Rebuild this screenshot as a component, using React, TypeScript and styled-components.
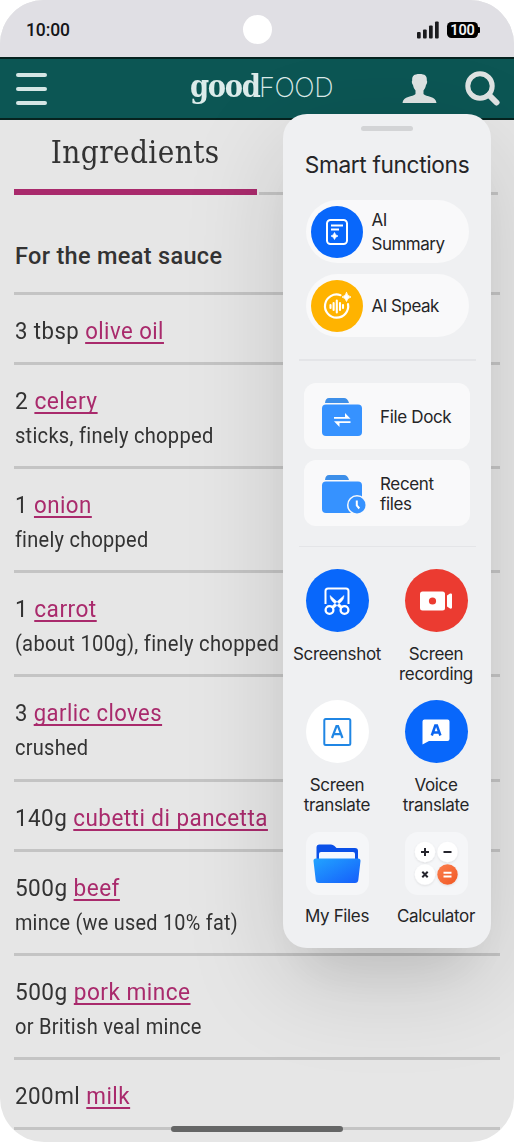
import React from "react";
import styled, { createGlobalStyle } from "styled-components";

const GlobalStyle = createGlobalStyle`
  *, *::before, *::after { box-sizing: border-box; }
  body { margin: 0; background: #fff; }
`;

const Phone = styled.main`
  position: relative;
  width: 514px;
  height: 1142px;
  overflow: hidden;
  border-radius: 44px;
  background: #e6e6e6;
  font-family: Roboto, "Liberation Sans", sans-serif;
  color: #333;
`;

const StatusBar = styled.header`
  display: grid;
  grid-template-columns: 1fr 28px 1fr;
  align-items: center;
  height: 57px;
  padding: 2px 36px 0 26px;
  background: #e0dfe4;
`;

const Clock = styled.span`
  font-size: 17.5px;
  font-weight: 500;
  line-height: 20px;
  letter-spacing: -0.1px;
  color: #151518;
`;

const Camera = styled.span`
  width: 29px;
  height: 29px;
  margin-left: 5px;
  border-radius: 50%;
  background: #fff;
`;

const StatusIcons = styled.div`
  display: flex;
  justify-content: flex-end;
  align-items: center;
  gap: 8px;
`;

const Battery = styled.span`
  position: relative;
  width: 31px;
  height: 16px;
  border-radius: 4.5px;
  background: #000;
  color: #f2f2f4;
  font-size: 14.5px;
  font-weight: 600;
  line-height: 17px;
  letter-spacing: -0.2px;
  text-align: center;
  &::after {
    content: "";
    position: absolute;
    right: -1.5px;
    top: 5px;
    width: 3px;
    height: 6px;
    border-radius: 1px;
    background: #000;
  }
`;

const SiteBar = styled.nav`
  display: flex;
  align-items: center;
  height: 63px;
  padding: 0 14px 0 16px;
  border-top: 2px solid #06231f;
  border-bottom: 2px solid #06231f;
  background: #0c5654;
`;

const Burger = styled.div`
  display: flex;
  flex-direction: column;
  gap: 10px;
  width: 31px;
  span { flex: none; height: 4px; border-radius: 2px; background: #d5e6e5; }
`;

const Logo = styled.div`
  display: flex;
  align-items: baseline;
  width: 144px;
  margin: -3px 0 0 143px;
  color: #dcebea;
  white-space: nowrap;
`;

const LogoGood = styled.b`
  width: 70px;
  font: 700 31px/40px "DejaVu Serif Condensed", "DejaVu Serif", serif;
  font-stretch: condensed;
  letter-spacing: -1.3px;
  transform: scaleX(0.98);
  transform-origin: 0 50%;
`;

const LogoFood = styled.span`
  margin-left: -1px;
  font: 200 27px/40px Inter, sans-serif;
  letter-spacing: -0.4px;
`;

const BarIcons = styled.div`
  display: flex;
  align-items: center;
  gap: 28px;
  margin-left: auto;
`;

const Tabs = styled.div`
  display: flex;
  align-items: flex-end;
  height: 75px;
  padding: 0 15px 0 14px;
`;

const ActiveTab = styled.h1`
  width: 243px;
  height: 75px;
  margin: 0;
  border-bottom: 6px solid #a92a6c;
  font: 400 31.5px/64px "DejaVu Serif Condensed", "DejaVu Serif", serif;
  font-stretch: condensed;
  letter-spacing: 0.4px;
  text-align: center;
  white-space: nowrap;
  span { display: inline-block; transform: scaleX(0.99); }
`;

const RestTab = styled.div`
  flex: 1;
  height: 3px;
  margin: 0 1px 0 2px;
  background: #c4c4c4;
`;

const Section = styled.h2`
  height: 97px;
  margin: 0;
  padding: 46px 15px 0;
  font-size: 23.5px;
  line-height: 30px;
  font-weight: 500;
  letter-spacing: 0.32px;
  white-space: nowrap;
`;

const List = styled.ul`
  margin: 0 14px;
  padding: 0;
  list-style: none;
`;

const Item = styled.li<{ $tall: boolean }>`
  height: ${(p) => (p.$tall ? 104.15 : 70)}px;
  padding-top: 21px;
  border-top: 3px solid #c4c4c4;
  white-space: nowrap;
`;

const Main = styled.div<{ $x: number }>`
  font-size: 24px;
  line-height: 30px;
  padding-left: 1px;
  letter-spacing: 0.5px;
  transform: scaleX(${(p) => p.$x});
  transform-origin: 0 50%;
`;

const Note = styled.div<{ $x: number }>`
  padding: 5px 0 0 1px;
  font-size: 22px;
  line-height: 30px;
  letter-spacing: 0.3px;
  transform: scaleX(${(p) => p.$x});
  transform-origin: 0 50%;
`;

const Link = styled.a`
  color: #a92a6c;
  text-decoration: underline;
  text-decoration-thickness: 2px;
  text-underline-offset: 3px;
  text-decoration-skip-ink: none;
`;

const HomeBar = styled.div`
  position: absolute;
  left: 171px;
  bottom: 10px;
  width: 172px;
  height: 6px;
  border-radius: 3px;
  background: #656666;
`;

const Panel = styled.aside`
  position: absolute;
  left: 283px;
  top: 114px;
  width: 208px;
  height: 834px;
  padding-top: 12px;
  border-radius: 24px;
  background: #eff0f2;
  box-shadow: 0 32px 100px rgba(0, 0, 0, 0.15), 0 44px 44px -24px rgba(0, 0, 0, 0.06);
  font: 400 17px/20px Inter, "Liberation Sans", sans-serif;
  letter-spacing: -0.35px;
  color: #252527;
`;

const Grip = styled.div`
  width: 52px;
  height: 5px;
  margin: 0 auto;
  border-radius: 3px;
  background: #d3d4d6;
`;

const PanelTitle = styled.h2`
  margin: 19px 0 21px;
  font-size: 22.7px;
  line-height: 29px;
  font-weight: 400;
  letter-spacing: -0.36px;
  text-align: center;
  white-space: nowrap;
`;

const Stack = styled.div`
  display: flex;
  flex-direction: column;
  gap: 11px;
  padding: 0 21px 0 21px;
`;

const Pill = styled.div`
  display: flex;
  align-items: center;
  gap: 8.5px;
  height: 63px;
  width: 163px;
  margin-left: 1.5px;
  padding-left: 5.5px;
  border-radius: 32px;
  background: #f9f9fa;
  line-height: 23.3px;
  letter-spacing: -0.5px;
`;

const PillLabel = styled.span`
  padding-top: 2px;
`;

const Disc = styled.span<{ $bg: string; $size: number }>`
  display: grid;
  place-items: center;
  flex: none;
  width: ${(p) => p.$size}px;
  height: ${(p) => p.$size}px;
  border-radius: 50%;
  background: ${(p) => p.$bg};
`;

const Divider = styled.hr<{ $top: number; $bottom: number }>`
  height: 1.5px;
  margin: ${(p) => p.$top}px 15px ${(p) => p.$bottom}px 16px;
  border: 0;
  background: #e4e5e8;
`;

const Card = styled.div`
  display: flex;
  align-items: center;
  gap: 13px;
  height: 66px;
  padding: 2px 0 0 17px;
  border-radius: 12px;
  background: #f9f9fa;
`;

const Grid = styled.div`
  display: grid;
  grid-template-columns: 99px 99px;
  grid-auto-rows: 131.3px;
  padding-left: 4.5px;
`;

const Shortcut = styled.div`
  display: flex;
  flex-direction: column;
  align-items: center;
  gap: 11.5px;
  text-align: center;
`;

const Tile = styled.span`
  display: grid;
  place-items: center;
  width: 63px;
  height: 63px;
  border-radius: 13px;
  background: #f5f6f8;
`;

const Signal = () => (
  <svg width="22" height="18" viewBox="0 0 22 18" fill="#1b1b1e">
    <rect x="0" y="11" width="3.700" height="6.500" rx="1" />
    <rect x="6" y="8.500" width="3.700" height="9" rx="1" />
    <rect x="12" y="4.500" width="3.700" height="13" rx="1" />
    <rect x="18" y="0.500" width="3.700" height="17" rx="1" />
  </svg>
);

const Person = () => (
  <svg width="35" height="31" viewBox="0 0 35 31" fill="#dfe3e3">
    <path d="M17.500 1C23 1 25.200 3 24.800 7.500C25.600 8.200 25 11 24 12C23.500 15 22.300 16.400 21.500 17.500V21C24 24 34 23 34.500 30H.5C1 23 11 24 13.500 21V17.500C12.700 16.400 11.500 15 11 12C10 11 9.400 8.200 10.200 7.500C9.800 3 12 1 17.500 1Z" />
  </svg>
);

const Search = () => (
  <svg width="35" height="35" viewBox="0 0 35 35" fill="none" stroke="#dfe3e3">
    <circle cx="15" cy="15" r="12.200" strokeWidth="5" />
    <path d="M24 24L31.500 31.500" strokeWidth="6" strokeLinecap="round" />
  </svg>
);

const SummaryIcon = () => (
  <svg width="24" height="28" viewBox="0 0 24 28" fill="none" stroke="#fff">
    <rect x="2" y="2" width="20" height="24" rx="3.500" strokeWidth="2" />
    <path d="M6 7.500H18M6 11.500H14" strokeWidth="2" />
    <path d="M9.500 14.500Q10.200 17.300 13 18Q10.200 18.700 9.500 21.500Q8.800 18.700 6 18Q8.800 17.300 9.500 14.500Z" fill="#fff" strokeWidth="0.700" />
  </svg>
);

const SpeakIcon = () => (
  <svg width="30" height="30" viewBox="0 0 30 30" fill="none" stroke="#fff" strokeLinecap="round">
    <path d="M18.500 4.200A11.600 11.600 0 1 0 26 13" strokeWidth="2.200" />
    <path d="M8.500 14V17M11.600 12V19M14.800 9.500V21.500M18 12V19M21 14V17" strokeWidth="2.100" />
    <path d="M24.500 1.500Q25.300 5.200 29 6Q25.300 6.800 24.500 10.500Q23.700 6.800 20 6Q23.700 5.200 24.500 1.500Z" fill="#fff" strokeWidth="0.800" />
  </svg>
);

const FolderIcon = ({ recent }: { recent?: boolean }) => (
  <svg width="46" height="40" viewBox="0 0 46 40">
    <path d="M4 6Q4.500 1 8 1H23Q26.500 1 28 6Z" fill="#3d8fe9" />
    <rect x="1" y="7.500" width="40" height="31.500" rx="4" fill="#3692ff" />
    {recent ? (
      <>
        <circle cx="36" cy="31" r="10" fill="#f9f9fa" />
        <circle cx="36" cy="31" r="8.500" fill="#3692ff" />
        <path d="M35.800 26.500V31.500L38.300 34.500" fill="none" stroke="#fff" strokeWidth="2" />
      </>
    ) : (
      <path d="M13 21.800V20H24V16L29.500 21.800ZM29.500 24.200V26H18.500V30L13 24.200Z" fill="#fff" />
    )}
  </svg>
);

const ScissorsIcon = () => (
  <svg width="28" height="30" viewBox="0 0 28 30" fill="none" stroke="#fff">
    <path d="M2.500 18V5Q2.500 2.500 5 2.500H23Q25.500 2.500 25.500 5V18" strokeWidth="2" />
    <circle cx="6.500" cy="24" r="3.900" strokeWidth="2.300" />
    <circle cx="21.500" cy="24" r="3.900" strokeWidth="2.300" />
    <path d="M7 9.500Q7 13 9.500 15.500L18 23L20 21ZM21 9.500Q21 13 18.500 15.500L10 23L8 21Z" fill="#fff" strokeWidth="0.500" />
  </svg>
);

const CameraIcon = () => (
  <svg width="34" height="20" viewBox="0 0 34 20">
    <rect x="1" y="0.500" width="25" height="19" rx="2.500" fill="#fff" />
    <path d="M28 4.500L31 2.500Q33 2 33 3.500V16.500Q33 18 31 17.500L28 15.500Z" fill="#fff" />
    <circle cx="13.500" cy="10" r="3.600" fill="#eb3b31" />
  </svg>
);

const BoxedA = () => (
  <svg width="30" height="30" viewBox="0 0 30 30" fill="none" stroke="#2086e4" strokeWidth="2">
    <rect x="2.300" y="2" width="26" height="26" rx="1.500" />
    <path d="M10 21L14.500 9H16L20.500 21M11.500 17.200H19" strokeWidth="2.200" />
  </svg>
);

const BubbleA = () => (
  <svg width="28" height="26" viewBox="0 0 28 26">
    <path d="M2.500 0.500H25.500Q27.500 0.500 27.500 2.500V20Q27.500 22 25.500 22H7L0.500 25.500V2.500Q0.500 0.500 2.500 0.500Z" fill="#fff" />
    <path d="M9.800 16.500L13.300 6.500H14.900L18.400 16.500M11 13.500H17.200" fill="none" stroke="#0b65f0" strokeWidth="2.500" />
  </svg>
);

const FilesIcon = () => (
  <svg width="48" height="40" viewBox="0 -1 48 40">
    <defs>
      <linearGradient id="front" x1="0" y1="0" x2="1" y2="1">
        <stop offset="0" stopColor="#22a4ff" />
        <stop offset="1" stopColor="#155dfb" />
      </linearGradient>
    </defs>
    <path d="M3.500 3.500Q3.500 0.500 6.500 0.500H18Q20 0.500 21.500 2L23.500 4H42Q45 4 45 7V28H3.500Z" fill="#0a50e8" />
    <path d="M6 10Q6 8 8 8H40Q42 8 42 10V20H6Z" fill="#f4f8ff" />
    <path d="M0.500 17Q0.300 14.500 3 14.500H45Q47.700 14.500 47.500 17L45.300 36Q45 39 42 39H6Q3 39 2.700 36Z" fill="url(#front)" />
  </svg>
);

const CalcIcon = () => (
  <svg width="50" height="50" viewBox="0 0 50 50" fill="none" strokeWidth="2" stroke="#25252d">
    <defs>
      <linearGradient id="equals" x1="0" y1="0" x2="1" y2="1">
        <stop offset="0" stopColor="#fb7f4e" />
        <stop offset="1" stopColor="#f15722" />
      </linearGradient>
      <filter id="lift" x="-20%" y="-20%" width="140%" height="140%">
        <feDropShadow dx="0" dy="1" stdDeviation="1" floodOpacity="0.1" />
      </filter>
    </defs>
    <g stroke="none" fill="#fff" filter="url(#lift)">
      <circle cx="14" cy="14" r="10.200" />
      <circle cx="36.500" cy="14" r="10.200" />
      <circle cx="14" cy="36.500" r="10.200" />
      <circle cx="36.500" cy="36.500" r="10.200" fill="url(#equals)" />
    </g>
    <path d="M10 14H18M14 10V18M32.500 14H40.500M11.300 33.800L16.700 39.200M16.700 33.800L11.300 39.200" />
    <path d="M32.500 34.700H40.500M32.500 38.500H40.500" stroke="#fff" />
  </svg>
);

type Ingredient = { qty: string; name: string; x: number; note?: string; nx?: number };

const ingredients: Ingredient[] = [
  { qty: "3 tbsp", name: "olive oil", x: 0.923 },
  { qty: "2", name: "celery", x: 0.95, note: "sticks, finely chopped", nx: 0.914 },
  { qty: "1", name: "onion", x: 0.93, note: "finely chopped", nx: 0.907 },
  { qty: "1", name: "carrot", x: 0.944, note: "(about 100g), finely chopped", nx: 0.919 },
  { qty: "3", name: "garlic cloves", x: 0.918, note: "crushed", nx: 0.91 },
  { qty: "140g", name: "cubetti di pancetta", x: 0.935 },
  { qty: "500g", name: "beef", x: 0.94, note: "mince (we used 10% fat)", nx: 0.902 },
  { qty: "500g", name: "pork mince", x: 0.943, note: "or British veal mince", nx: 0.913 },
  { qty: "200ml", name: "milk", x: 0.935 },
];

export default function App() {
  return (
    <>
      <GlobalStyle />
      <Phone>
        <StatusBar>
          <Clock>10:00</Clock>
          <Camera />
          <StatusIcons>
            <Signal />
            <Battery>100</Battery>
          </StatusIcons>
        </StatusBar>
        <SiteBar>
          <Burger><span /><span /><span /></Burger>
          <Logo><LogoGood>good</LogoGood><LogoFood>FOOD</LogoFood></Logo>
          <BarIcons><Person /><Search /></BarIcons>
        </SiteBar>
        <Tabs>
          <ActiveTab><span>Ingredients</span></ActiveTab>
          <RestTab />
        </Tabs>
        <Section>For the meat sauce</Section>
        <List>
          {ingredients.map((i) => (
            <Item key={i.name} $tall={!!i.note}>
              <Main $x={i.x}>{i.qty} <Link>{i.name}</Link></Main>
              {i.note && <Note $x={i.nx ?? 1}>{i.note}</Note>}
            </Item>
          ))}
          <Item $tall={false} />
        </List>
        <HomeBar />
        <Panel>
          <Grip />
          <PanelTitle>Smart functions</PanelTitle>
          <Stack>
            <Pill>
              <Disc $bg="#0867fb" $size={52}><SummaryIcon /></Disc>
              <PillLabel>AI<br />Summary</PillLabel>
            </Pill>
            <Pill>
              <Disc $bg="#ffb300" $size={52}><SpeakIcon /></Disc>
              <PillLabel>AI Speak</PillLabel>
            </Pill>
          </Stack>
          <Divider $top={22} $bottom={22} />
          <Stack>
            <Card><FolderIcon /><span>File Dock</span></Card>
            <Card><FolderIcon recent /><span>Recent<br />files</span></Card>
          </Stack>
          <Divider $top={20} $bottom={22} />
          <Grid>
            <Shortcut><Disc $bg="#0867fb" $size={63}><ScissorsIcon /></Disc><span>Screenshot</span></Shortcut>
            <Shortcut><Disc $bg="#eb3b31" $size={63}><CameraIcon /></Disc><span>Screen<br />recording</span></Shortcut>
            <Shortcut><Disc $bg="#fff" $size={63}><BoxedA /></Disc><span>Screen<br />translate</span></Shortcut>
            <Shortcut><Disc $bg="#0867fb" $size={63}><BubbleA /></Disc><span>Voice<br />translate</span></Shortcut>
            <Shortcut><Tile><FilesIcon /></Tile><span>My Files</span></Shortcut>
            <Shortcut><Tile><CalcIcon /></Tile><span>Calculator</span></Shortcut>
          </Grid>
        </Panel>
      </Phone>
    </>
  );
}
